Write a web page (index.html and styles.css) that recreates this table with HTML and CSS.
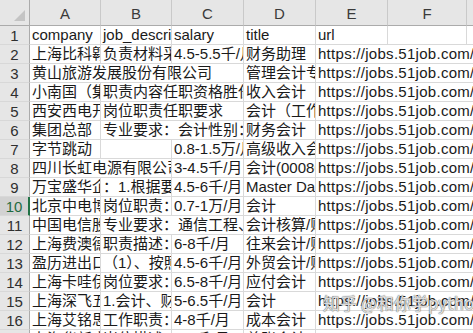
FILE: index.html
```html
<!DOCTYPE html>
<html lang="zh">
<head>
<meta charset="utf-8">
<title>Sheet</title>
<link rel="stylesheet" href="styles.css">
</head>
<body>
<div class="sheet">
  <div class="grid">
    <div class="corner"><span class="tri"></span></div>
    <div class="ch">A</div><div class="ch">B</div><div class="ch">C</div><div class="ch">D</div><div class="ch">E</div><div class="ch">F</div><div class="ch last"></div>

    <div class="rh">1</div>
    <div class="c">company</div><div class="c">job_description</div><div class="c">salary</div><div class="c">title</div><div class="c">url</div><div class="c"></div><div class="c"></div>

    <div class="rh">2</div>
    <div class="c">上海比科翱材料科技有限公司</div><div class="c">负责材料采购</div><div class="c">4.5-5.5千/月</div><div class="c">财务助理</div><div class="c url">https://jobs.51job.com/shanghai/1234.html</div>

    <div class="rh">3</div>
    <div class="c s3">黄山旅游发展股份有限公司</div><div class="c">管理会计专员</div><div class="c url">https://jobs.51job.com/</div>

    <div class="rh">4</div>
    <div class="c">小南国（集团）有限公司</div><div class="c s2">职责内容任职资格胜任能力</div><div class="c">收入会计</div><div class="c url">https://jobs.51job.com/shanghai/1234.html</div>

    <div class="rh">5</div>
    <div class="c">西安西电开关电气有限公司</div><div class="c s2">岗位职责任职要求</div><div class="c">会计（工作地点）</div><div class="c url">https://jobs.51job.com/shanghai/1234.html</div>

    <div class="rh">6</div>
    <div class="c">集团总部</div><div class="c s2">专业要求：会计性别：不限</div><div class="c">财务会计</div><div class="c url">https://jobs.51job.com/shanghai/1234.html</div>

    <div class="rh">7</div>
    <div class="c">字节跳动</div><div class="c"></div><div class="c">0.8-1.5万/月</div><div class="c">高级收入会计</div><div class="c url">https://jobs.51job.com/</div>

    <div class="rh">8</div>
    <div class="c s2">四川长虹电源有限公司</div><div class="c">3-4.5千/月</div><div class="c">会计(00086)</div><div class="c url">https://jobs.51job.com/</div>

    <div class="rh">9</div>
    <div class="c">万宝盛华企业管理咨询</div><div class="c">：1.根据要求</div><div class="c">4.5-6千/月</div><div class="c">Master Data</div><div class="c url">https://jobs.51job.com/shanghai/1234.html</div>

    <div class="rh sel">10</div>
    <div class="c">北京中电博顺科技</div><div class="c">岗位职责：</div><div class="c">0.7-1万/月</div><div class="c">会计</div><div class="c url">https://jobs.51job.com/</div>

    <div class="rh">11</div>
    <div class="c">中国电信股份有限公司</div><div class="c s2">专业要求：通信工程、</div><div class="c">会计核算/财务</div><div class="c url">https://jobs.51job.com/shanghai/1234.html</div>

    <div class="rh">12</div>
    <div class="c">上海费澳德贸易</div><div class="c">职责描述：</div><div class="c">6-8千/月</div><div class="c">往来会计/财务</div><div class="c url">https://jobs.51job.com/shanghai/1234.html</div>

    <div class="rh">13</div>
    <div class="c">盈历进出口贸易</div><div class="c">（1）、按照</div><div class="c">4.5-6千/月</div><div class="c">外贸会计/财务</div><div class="c url">https://jobs.51job.com/shanghai/1234.html</div>

    <div class="rh">14</div>
    <div class="c">上海卡哇伊食品</div><div class="c">岗位要求：</div><div class="c">6.5-8千/月</div><div class="c">应付会计</div><div class="c url">https://jobs.51job.com/shanghai/1234.html</div>

    <div class="rh">15</div>
    <div class="c">上海深飞五金</div><div class="c">1.会计、财务</div><div class="c">5-6.5千/月</div><div class="c">会计</div><div class="c url">https://jobs.51job.com/shanghai/1234.html</div>

    <div class="rh">16</div>
    <div class="c">上海艾铭思汽车</div><div class="c">工作职责：</div><div class="c">4-8千/月</div><div class="c">成本会计</div><div class="c url">https://jobs.51job.com/shanghai/1234.html</div>

    <div class="rh">17</div>
    <div class="c">上海华新商贸</div><div class="c">岗位描述：</div><div class="c">6-8千/月</div><div class="c">总账会计</div><div class="c url">https://jobs.51job.com/shanghai/1234.html</div>
  </div>
  <div class="watermark">知乎 @和你学python</div>
</div>
</body>
</html>
```

FILE: styles.css
```css
html, body {
  margin: 0;
  padding: 0;
  background: #ffffff;
  overflow: hidden;
}

.sheet {
  position: relative;
  width: 473px;
  height: 333px;
  overflow: hidden;
  font-family: "Liberation Sans", "Noto Sans CJK SC", sans-serif;
  font-size: 15px;
  color: #1a1a1a;
}

.grid {
  display: grid;
  grid-template-columns: 30px 71px 71px 72px 72px 72px 79px 40px;
  grid-template-rows: 26px repeat(17, 19px);
  width: 507px;
}

.corner {
  position: relative;
  background: #e6e6e6;
  border-right: 1px solid #ababab;
  border-bottom: 1px solid #ababab;
  box-sizing: border-box;
}

.tri {
  position: absolute;
  right: 4px;
  bottom: 4px;
  width: 0;
  height: 0;
  border-left: 11px solid transparent;
  border-bottom: 11px solid #c4c4c4;
}

.ch {
  background: #e6e6e6;
  border-right: 1px solid #c9c9c9;
  border-bottom: 1px solid #ababab;
  box-sizing: border-box;
  display: flex;
  align-items: center;
  justify-content: center;
  color: #3a3a3a;
  font-size: 15px;
  line-height: 1;
  padding-top: 2px;
}

.rh {
  background: #e6e6e6;
  border-right: 1px solid #ababab;
  border-bottom: 1px solid #d8d8d8;
  box-sizing: border-box;
  display: flex;
  align-items: center;
  justify-content: center;
  color: #2f2f2f;
  font-size: 15px;
  line-height: 1;
}

.rh.sel {
  background: #d2d2d2;
  border-right: 2px solid #217346;
  color: #1f6b41;
}

.c {
  border-right: 1px solid #d9d9d9;
  border-bottom: 1px solid #d9d9d9;
  box-sizing: border-box;
  white-space: nowrap;
  overflow: hidden;
  padding-left: 2px;
  line-height: 18px;
  height: 19px;
}

.s2 {
  grid-column: span 2;
}

.s3 {
  grid-column: span 3;
}

.url {
  grid-column: span 3;
  letter-spacing: 0.28px;
}

.watermark {
  position: absolute;
  left: 323px;
  top: 293px;
  font-family: "Noto Sans CJK SC", "Noto Sans", sans-serif;
  font-size: 17px;
  line-height: 20px;
  color: rgba(255, 255, 255, 0.8);
  text-shadow: 0 0 1px rgba(90, 90, 90, 0.9), 0 0 1px rgba(90, 90, 90, 0.9);
  white-space: nowrap;
  pointer-events: none;
}
```
